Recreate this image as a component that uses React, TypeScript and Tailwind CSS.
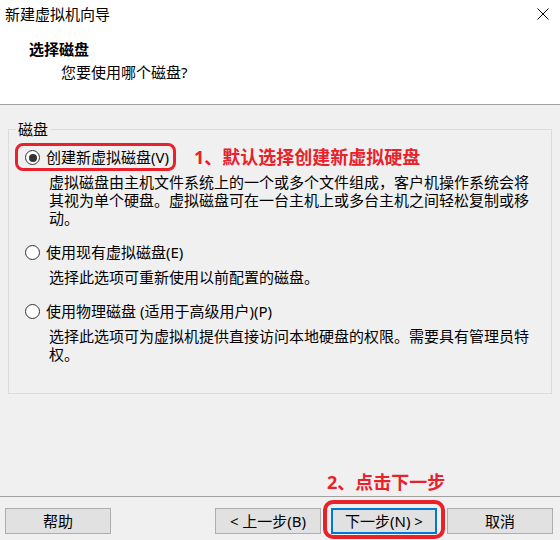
import React from "react";

/* ── Radio bullet ── */
function Radio({ checked = false }: { checked?: boolean }) {
  return (
    <span className="w-[15px] h-[15px] rounded-full border border-[#333333] bg-white flex items-center justify-center shrink-0">
      {checked && <span className="w-[8px] h-[8px] rounded-full bg-[#333333]" />}
    </span>
  );
}

/* ── Button ── */
function WinButton({ label, primary = false }: { label: string; primary?: boolean }) {
  return (
    <button
      className={
        primary
          ? "w-[106px] h-[26px] bg-[#e1e1e1] border-2 border-[#0078d7] text-[15px] leading-[19px] text-black flex items-center justify-center"
          : "w-[106px] h-[26px] bg-[#e1e1e1] border border-[#adadad] text-[15px] leading-[19px] text-black flex items-center justify-center"
      }
    >
      {label}
    </button>
  );
}

/* ── Option row ── */
interface OptionProps {
  label: string;
  desc: string;
  checked?: boolean;
}

function Option({ label, desc, checked = false }: OptionProps) {
  return (
    <div className="flex flex-col mt-[16px]">
      <div className="flex items-center h-[19px]">
        <Radio checked={checked} />
        <span className="ml-[6px] whitespace-nowrap">{label}</span>
      </div>
      <p className="mt-[6px] ml-[24px] w-[485px] leading-[18px]">{desc}</p>
    </div>
  );
}

export default function App() {
  return (
    <div className="w-[560px] h-[540px] bg-[#f0f0f0] flex flex-col overflow-hidden text-[15px] leading-[19px] text-black font-['Noto_Sans','Noto_Sans_CJK_SC',sans-serif]">
      {/* Header */}
      <div className="h-[105px] bg-white border-b border-[#a0a0a0] shrink-0 flex flex-col">
        <div className="h-[28px] flex items-center justify-between pl-[5px] pr-[11px]">
          <span>新建虚拟机向导</span>
          <svg viewBox="0 0 12 12" className="w-[12px] h-[12px]" fill="none">
            <path d="M0.5 0.5L11.5 11.5M11.5 0.5L0.5 11.5" stroke="#000" strokeWidth="1" />
          </svg>
        </div>
        <div className="pl-[29px] mt-[12px] font-bold">选择磁盘</div>
        <div className="pl-[61px] mt-[4px]">您要使用哪个磁盘?</div>
      </div>

      {/* Body */}
      <div className="flex-1 flex flex-col px-[8px] pt-[15px]">
        <fieldset className="border border-[#dcdcdc] h-[274px] px-0 m-0">
          <legend className="ml-[7px] px-[2px]">磁盘</legend>
          <div className="pl-[16px] pt-[9px]">
            {/* first option with annotation */}
            <div className="flex flex-col">
              <div className="flex items-center h-[19px]">
                <div className="relative inline-flex items-center">
                  <Radio checked />
                  <span className="ml-[6px] whitespace-nowrap">创建新虚拟磁盘(V)</span>
                  <div className="absolute -left-[10px] -right-[7px] -top-[5px] -bottom-[4px] border-[3px] border-[#e8212b] rounded-[8px] pointer-events-none" />
                </div>
                <span className="ml-[25px] text-[18px] font-bold text-[#e8212b] whitespace-nowrap">
                  1、默认选择创建新虚拟硬盘
                </span>
              </div>
              <p className="mt-[6px] ml-[24px] w-[485px] leading-[18px]">
                虚拟磁盘由主机文件系统上的一个或多个文件组成，客户机操作系统会将其视为单个硬盘。虚拟磁盘可在一台主机上或多台主机之间轻松复制或移动。
              </p>
            </div>
            <Option label="使用现有虚拟磁盘(E)" desc="选择此选项可重新使用以前配置的磁盘。" />
            <Option
              label="使用物理磁盘 (适用于高级用户)(P)"
              desc="选择此选项可为虚拟机提供直接访问本地硬盘的权限。需要具有管理员特权。"
            />
          </div>
        </fieldset>
      </div>

      {/* Footer */}
      <div className="h-[44px] shrink-0 border-t border-[#a0a0a0] flex items-start pt-[11px] pl-[5px] pr-[7px]">
        <WinButton label="帮助" />
        <div className="flex-1" />
        <div className="flex gap-[10px]">
          <WinButton label="< 上一步(B)" />
          <div className="relative">
            <WinButton label="下一步(N) >" primary />
            <div className="absolute -left-[8px] -right-[8px] -top-[8px] -bottom-[5px] border-[4px] border-[#e8212b] rounded-[10px] pointer-events-none" />
            <span className="absolute left-[-4px] bottom-[41px] text-[18px] leading-[22px] font-bold text-[#e8212b] whitespace-nowrap">
              2、点击下一步
            </span>
          </div>
          <WinButton label="取消" />
        </div>
      </div>
    </div>
  );
}
